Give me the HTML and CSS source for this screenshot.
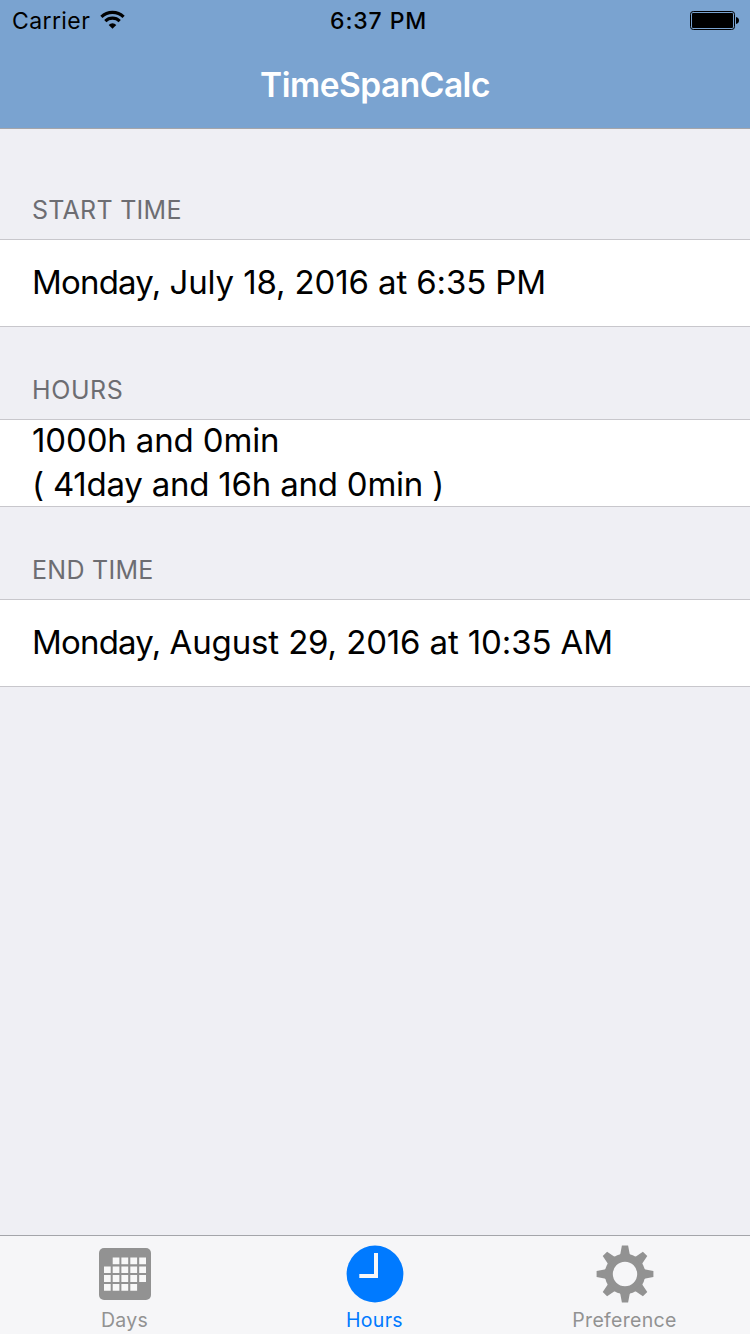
FILE: index.html
```html
<!DOCTYPE html>
<html lang="en">
<head>
<meta charset="utf-8">
<title>TimeSpanCalc</title>
<link rel="stylesheet" href="styles.css">
</head>
<body>
<div class="app">
  <header class="top">
    <div class="status">
      <div class="status-left"><span class="carrier">Carrier</span>
        <svg class="wifi" width="26" height="20" viewBox="100 10 26 20"><path d="M112.5 28.8L108.7 24.9A5.4 5.4 0 0 1 116.3 24.9Z"/><path class="arc" d="M105.3 21.1A10.3 10.3 0 0 1 119.7 21.1M101.4 16.9A15.8 15.8 0 0 1 123.6 16.9"/></svg>
      </div>
      <span class="clock">6:37 PM</span>
      <svg class="battery" width="50" height="20" viewBox="690 10 50 20"><rect x="690.5" y="11.5" width="44" height="18" rx="2.8" fill="none" stroke="#000"/><rect x="692" y="13" width="41" height="15" rx="1"/><path d="M736 17Q739 17.6 739 20.5T736 24Z"/></svg>
    </div>
    <h1 class="title">TimeSpanCalc</h1>
  </header>
  <main class="content">
    <section class="group">
      <h2 class="label">START TIME</h2>
      <div class="cell"><span class="date"><span class="weekday">Monday,</span> July 18, 2016 at 6:35 PM</span></div>
    </section>
    <section class="group">
      <h2 class="label label-hours">HOURS</h2>
      <div class="cell"><span class="total">1000h and 0min</span><span class="breakdown">( 41day and 16h and 0min )</span></div>
    </section>
    <section class="group">
      <h2 class="label">END TIME</h2>
      <div class="cell"><span class="date"><span class="weekday">Monday,</span> August 29, 2016 at 10:35 AM</span></div>
    </section>
  </main>
  <nav class="tabs">
    <a class="tab">
      <svg width="60" height="60" viewBox="-30 -30 60 60"><rect x="-26" y="-26" width="52" height="52" rx="5" fill="#929292"/><path fill="#f8f8f8" d="M-12.3-16.4h6.7v6.7h-6.7zM-3.6-16.4h6.8v6.7h-6.8zM5.3-16.4h6.8v6.7h-6.8zM14.2-16.4h6.8v6.7h-6.8zM-21-7.6h6.7v6.7h-6.7zM-12.3-7.6h6.7v6.7h-6.7zM-3.6-7.6h6.8v6.7h-6.8zM5.3-7.6h6.8v6.7h-6.8zM14.2-7.6h6.8v6.7h-6.8zM-21 1.1h6.7v6.8h-6.7zM-12.3 1.1h6.7v6.8h-6.7zM-3.6 1.1h6.8v6.8h-6.8zM5.3 1.1h6.8v6.8h-6.8zM14.2 1.1h6.8v6.8h-6.8zM-21 10h6.7v6.7h-6.7zM-12.3 10h6.7v6.7h-6.7zM-3.6 10h6.8v6.7h-6.8zM5.3 10h6.8v6.7h-6.8z"/></svg>
      <span>Days</span>
    </a>
    <a class="tab active">
      <svg width="60" height="60" viewBox="-30 -30 60 60"><circle r="28.4" fill="#007aff"/><path fill="#f8f8f8" d="M-1-21H3V4H-15.7V0H-1Z"/></svg>
      <span>Hours</span>
    </a>
    <a class="tab">
      <svg width="60" height="60" viewBox="-30 -30 60 60" fill="#929292"><defs><path id="tooth" d="M-5.4-18L-4.6-20.5L-3.1-28.4H3.1L4.6-20.5L5.4-18Z"/></defs><circle r="16.2" fill="none" stroke="#929292" stroke-width="8"/><use href="#tooth"/><use href="#tooth" transform="rotate(45)"/><use href="#tooth" transform="rotate(90)"/><use href="#tooth" transform="rotate(135)"/><use href="#tooth" transform="rotate(180)"/><use href="#tooth" transform="rotate(225)"/><use href="#tooth" transform="rotate(270)"/><use href="#tooth" transform="rotate(315)"/></svg>
      <span>Preference</span>
    </a>
  </nav>
</div>
</body>
</html>
```
FILE: styles.css
```css
* { box-sizing: border-box; margin: 0; padding: 0; }
body { font-family: Inter, "Liberation Sans", sans-serif; color: #000; }
svg { display: block; }
span { white-space: nowrap; }
.app { width: 750px; height: 1334px; display: flex; flex-direction: column; background: #efeff4; overflow: hidden; }
.top { height: 129px; background: #7aa3d0; border-bottom: 1px solid #a4a5aa; }
.status { height: 40px; padding: 0 10px 0 12px; display: grid; grid-template-columns: 318px 1fr 50px; align-items: center; font-size: 23px; line-height: 38px; }
.status-left { display: flex; align-items: center; gap: 10px; }
.carrier { letter-spacing: 0.4px; width: 78px; padding-top: 2px; }
.arc { fill: none; stroke: #000; stroke-width: 3.1; }
.clock { font-weight: 500; letter-spacing: 0.9px; padding-top: 2px; }
.title { height: 88px; line-height: 90px; text-align: center; color: #fff; font-size: 33.5px; font-weight: 600; letter-spacing: -0.5px; }
.content { flex: 1; padding-top: 18px; }
.label { height: 92px; padding: 48px 32px 0; line-height: 30px; font-size: 25px; font-weight: 400; letter-spacing: 0.27px; color: #6d6d72; }
.label-hours { letter-spacing: 0.6px; }
.cell { height: 88px; padding: 0 32px 2px; display: flex; flex-direction: column; justify-content: center; background: #fff; border: solid #c8c7cc; border-width: 1px 0; font-size: 33px; line-height: 44px; }
.date { letter-spacing: -0.13px; }
.weekday { letter-spacing: -0.8px; }
.total { letter-spacing: -0.14px; }
.breakdown { letter-spacing: -0.22px; }
.tabs { height: 99px; display: grid; grid-template-columns: repeat(3, 250px); background: #f6f6f8; border-top: 1px solid #a4a5aa; }
.tab { display: flex; flex-direction: column; align-items: center; padding-top: 8px; color: #929292; font-size: 19.5px; line-height: 32px; letter-spacing: 0.3px; }
.tab span { margin-right: 1px; }
.active { color: #007aff; }
```
